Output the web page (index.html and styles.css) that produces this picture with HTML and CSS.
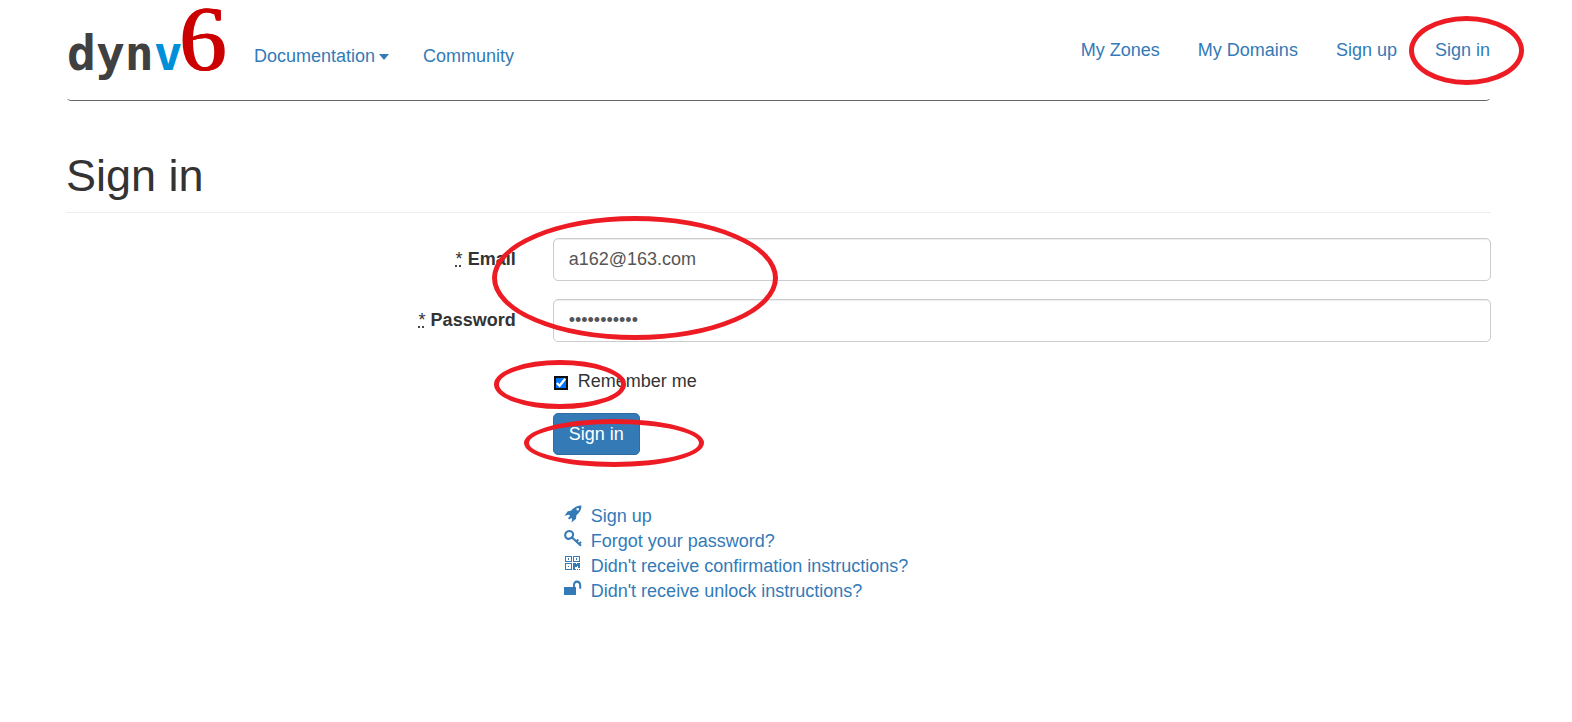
FILE: index.html
```html
<!DOCTYPE html>
<html lang="en">
<head>
  <meta charset="UTF-8" />
  <meta name="viewport" content="width=device-width, initial-scale=1.0"/>
  <title>Sign in - dynv6</title>
  <link rel="stylesheet" href="styles.css">
</head>
<body>
  <div class="container">
    <header class="navbar">
      <a class="brand" href="#">dyn<span class="brand-v">v</span><span class="brand-6">6</span></a>
      <nav class="nav nav-left">
        <a href="#">Documentation<span class="caret"></span></a>
        <a href="#">Community</a>
      </nav>
      <nav class="nav nav-right">
        <a href="#">My Zones</a>
        <a href="#">My Domains</a>
        <a href="#">Sign up</a>
        <a href="#">Sign in<span class="mark mark-nav"></span></a>
      </nav>
    </header>

    <h1>Sign in</h1>

    <form class="form">
      <div class="row">
        <label for="email"><abbr title="required">*</abbr> Email</label>
        <div class="field">
          <input class="control" type="email" id="email" value="a162@163.com">
          <span class="mark mark-fields"></span>
        </div>
      </div>
      <div class="row">
        <label for="password"><abbr title="required">*</abbr> Password</label>
        <div class="field">
          <input class="control" type="password" id="password" value="password123">
        </div>
      </div>
      <div class="row">
        <div class="field remember">
          <input type="checkbox" id="remember" checked>
          <label for="remember">Remember me</label>
          <span class="mark mark-remember"></span>
        </div>
      </div>
      <div class="row">
        <div class="field">
          <button type="submit">Sign in</button>
          <span class="mark mark-submit"></span>
        </div>
      </div>
    </form>

    <div class="row">
      <ul class="field links">
        <li>
          <svg class="icon" viewBox="0 0 18 18"><path fill-rule="evenodd" d="M17.500 .5C13 .6 9.500 2.500 7 5.700L3.800 6.200 .5 10.800l4.200-1 1.500 1-2.200 2.500 1.200 1.200 2-1.500 1 1-.7 3.500 4.500-3.800.4-3.500C16 7.200 17.400 4.500 17.500.5zM13.700 3a1.300 1.300 0 1 1 0 2.600 1.300 1.300 0 0 1 0-2.600z"/></svg>
          <a href="#">Sign up</a>
        </li>
        <li>
          <svg class="icon key" viewBox="0 0 18 18"><path d="M2 2.500Q4.500.2 7.500 1.500 10.200 3.500 8.500 6.700 6.500 9.500 3.200 8.700-.2 6.500 2 2.500z"/><path d="M8 7.500l9 8.300M12.500 11.500l1.800-2M15 14l2-2.200"/></svg>
          <a href="#">Forgot your password?</a>
        </li>
        <li>
          <svg class="icon" viewBox="0 0 18 18"><path fill-rule="evenodd" d="M1 1h7v6H1zm1 1v4h5V2zm2 1h1v2H4zM9 1h7v6H9zm1 1v4h5V2zm2 1h1v2h-1zM1 8h7v7H1zm1 1v5h5V9zm2 2h1v1H4zM9 8h3v1h1V8h3v5h-2v-2h-1v1h-2v2H9zM9 14h3v1H9zM13 14h1v1h-1zM15 14h1v1h-1z"/></svg>
          <a href="#">Didn't receive confirmation instructions?</a>
        </li>
        <li>
          <svg class="icon" viewBox="0 0 18 18"><path d="M0 7h9V5.200C9 2.500 10.600.5 13 .5s4.200 2 4.200 4.700V8c0 1.200-2 1.200-2 0V5.200c0-1.500-.9-2.500-2.200-2.500s-2.100 1-2.100 2.500V7H12V15H0z"/></svg>
          <a href="#">Didn't receive unlock instructions?</a>
        </li>
      </ul>
    </div>
  </div>
</body>
</html>
```

FILE: styles.css
```css
* {
  box-sizing: border-box;
}
body {
  margin: 0;
  padding-right: 15px;
  font-family: "Liberation Sans", Arial, sans-serif;
  font-size: 18px;
  line-height: 25px;
  color: #333;
  background: #fff;
}
a {
  color: #337ab7;
  text-decoration: none;
}
.container {
  max-width: 1463px;
  margin: 0 auto;
  padding: 0 19px;
}

/* header */
.navbar {
  display: flex;
  height: 101px;
  border: 1px solid transparent;
  border-bottom-color: #666;
  border-radius: 5px;
}
.brand {
  width: 160px;
  font-family: "DejaVu Sans Mono", monospace;
  font-size: 48px;
  font-weight: bold;
  line-height: 105px;
  color: #404040;
  white-space: nowrap;
}
.brand-v {
  color: #0090d9;
}
.brand-6 {
  margin-left: -3px;
  font-family: "Liberation Serif", serif;
  font-size: 94px;
  font-weight: normal;
  line-height: 0;
  color: #c00;
  text-shadow: 1px 0 #c00, -1px 0 #c00;
}
.nav {
  display: flex;
}
.nav a {
  position: relative;
}
.nav-left {
  gap: 34px;
  padding: 43px 0 0 27px;
}
.nav-right {
  gap: 38px;
  margin-left: auto;
  padding-top: 37px;
}
.caret {
  display: inline-block;
  margin-left: 4px;
  vertical-align: middle;
  border-top: 6px solid;
  border-left: 5px solid transparent;
  border-right: 5px solid transparent;
}

h1 {
  margin: 50px 0 25px;
  padding-bottom: 11px;
  border-bottom: 1px solid #eee;
  font-size: 45px;
  font-weight: normal;
  line-height: 50px;
}

/* form */
.row {
  display: grid;
  grid-template-columns: 1fr 2fr;
  margin: 0 -19px 18px;
}
.row > label {
  margin: 9px 19px 0;
  text-align: right;
  font-weight: bold;
}
.field {
  position: relative;
  grid-column: 2;
  margin: 0 19px 0 18px;
}
abbr {
  font-weight: normal;
  text-decoration: underline dotted;
}
.control {
  display: block;
  width: 100%;
  height: 43px;
  padding: 7px 15px;
  border: 1px solid #ccc;
  border-radius: 5px;
  box-shadow: inset 0 1px 1px rgba(0, 0, 0, 0.075);
  font: inherit;
  color: #555;
}
.remember {
  display: flex;
  align-items: center;
  gap: 10px;
  padding: 9px 0 1px;
}
.remember input {
  width: 14px;
  height: 14px;
  margin: 2px 0 0 1px;
  outline: 2px solid #101010;
  outline-offset: -2px;
  border-radius: 3px;
}
button {
  display: block;
  height: 42px;
  padding: 0 15px;
  border: 1px solid #2e6da4;
  border-radius: 5px;
  background: #337ab7;
  font: inherit;
  color: #fff;
}
.links {
  margin-top: 31px;
  padding: 0 0 0 11px;
  list-style: none;
}
.links li {
  display: flex;
  gap: 9px;
}
.icon {
  width: 18px;
  height: 18px;
  margin-top: 1px;
  fill: #337ab7;
}
.key {
  fill: none;
  stroke: #337ab7;
  stroke-width: 2;
}

/* red rings */
.mark {
  position: absolute;
  border: 5px solid #ed1c24;
  border-radius: 50%;
  pointer-events: none;
}
.mark-nav {
  top: -22px;
  left: -26px;
  width: 115px;
  height: 69px;
}
.mark-fields {
  z-index: 1;
  top: -22px;
  left: -61px;
  width: 286px;
  height: 124px;
}
.mark-remember {
  top: 0;
  left: -59px;
  width: 132px;
  height: 49px;
}
.mark-submit {
  top: 6px;
  left: -29px;
  width: 180px;
  height: 48px;
}
```
